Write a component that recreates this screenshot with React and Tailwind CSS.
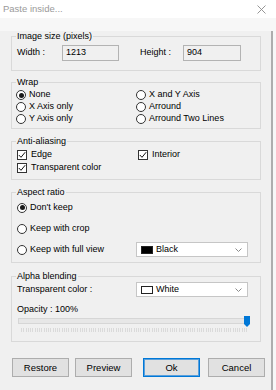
import React from "react";

function Radio({ checked, label }) {
  return (
    <div className="flex h-full items-center gap-[3px]">
      <span className="flex h-[10px] w-[10px] items-center justify-center rounded-full border border-[#333333] bg-white">
        {checked && <span className="h-[5px] w-[5px] rounded-full bg-[#1a1a1a]" />}
      </span>
      <span>{label}</span>
    </div>
  );
}

function Check({ label }) {
  return (
    <div className="flex h-full items-center gap-[4px]">
      <span className="flex h-[10px] w-[10px] items-center justify-center border border-[#333333] bg-white">
        <svg width="8" height="8" viewBox="0 0 8 8">
          <path d="M0.8 4 L3 6.3 L7.2 1.2" fill="none" stroke="#111111" strokeWidth="1" />
        </svg>
      </span>
      <span>{label}</span>
    </div>
  );
}

function Group({ title, className = "", children }) {
  return (
    <fieldset className={`w-[250px] border border-[#d9d9d9] px-[5px] ${className}`}>
      <legend className="-ml-[1px] px-[1px] leading-[10px]">{title}</legend>
      {children}
    </fieldset>
  );
}

function Select({ swatch, label }) {
  return (
    <div className="flex h-[15px] w-[112px] items-center border border-[#c6c6c6] bg-white pl-[4px] pr-[5px]">
      <span className={`h-[8px] w-[12px] border border-[#222222] ${swatch}`} />
      <span className="ml-[3px] flex-1">{label}</span>
      <svg width="7" height="4" viewBox="0 0 7 4">
        <path d="M0.5 0.5 L3.5 3.5 L6.5 0.5" fill="none" stroke="#8a8a8a" strokeWidth="1" />
      </svg>
    </div>
  );
}

function Button({ label, focused, className = "" }) {
  return (
    <button
      className={`h-[19px] w-[57px] border bg-[#e1e1e1] text-[9.5px] leading-none text-black ${
        focused ? "border-[#0078d7] shadow-[inset_0_0_0_1px_#5aa0dc]" : "border-[#adadad]"
      } ${className}`}
    >
      {label}
    </button>
  );
}

export default function App() {
  const ticks = Array.from({ length: 101 });
  return (
    <div className="h-[390px] w-[276px] overflow-hidden bg-[#f7f7f7] font-['Liberation_Sans',Arial,sans-serif] text-[9px] text-black">
      <div className="relative flex h-[18px] items-center bg-white pl-[3px] text-[9.5px] text-[#9a9a9a]">
        <span>Paste inside...</span>
        <svg className="absolute left-[257px] top-[5px]" width="9" height="9" viewBox="0 0 9 9">
          <path d="M0.5 0.5 L8.5 8.5 M8.5 0.5 L0.5 8.5" stroke="#8a8a8a" strokeWidth="0.9" />
        </svg>
      </div>
      <div className="h-[372px] w-[273px] border-r-[2px] border-[#adadad] bg-[#f0f0f0] pl-[11px]">
        <Group title="Image size (pixels)" className="mt-[13px] pb-[9px]">
          <div className="mt-[4px] flex h-[16px] items-center">
            <span className="w-[45px]">Width :</span>
            <span className="flex h-[16px] w-[57px] items-center border border-[#b3b3b3] bg-[#f0f0f0] pl-[3px]">1213</span>
            <span className="ml-[21px] w-[43px]">Height :</span>
            <span className="flex h-[16px] w-[58px] items-center border border-[#b3b3b3] bg-[#f0f0f0] pl-[3px]">904</span>
          </div>
        </Group>

        <Group title="Wrap" className="mt-[6px] pb-[3px]">
          <div className="-ml-[1px] mt-[2px] grid grid-cols-[120px_1fr] auto-rows-[12px]">
            <Radio checked label="None" />
            <Radio label="X and Y Axis" />
            <Radio label="X Axis only" />
            <Radio label="Arround" />
            <Radio label="Y Axis only" />
            <Radio label="Arround Two Lines" />
          </div>
        </Group>

        <Group title="Anti-aliasing" className="mt-[7px] pb-[5px]">
          <div className="mt-[2px] grid grid-cols-[121px_1fr] auto-rows-[13px]">
            <Check label="Edge" />
            <Check label="Interior" />
            <Check label="Transparent color" />
          </div>
        </Group>

        <Group title="Aspect ratio" className="mt-[7px] pb-[2px]">
          <div className="flex flex-col">
            <div className="h-[21px]">
              <Radio checked label="Don't keep" />
            </div>
            <div className="h-[21px]">
              <Radio label="Keep with crop" />
            </div>
            <div className="flex h-[21px] items-center">
              <div className="h-full w-[119px]">
                <Radio label="Keep with full view" />
              </div>
              <Select swatch="bg-black" label="Black" />
            </div>
          </div>
        </Group>

        <Group title="Alpha blending" className="mt-[8px] pb-[9px]">
          <div className="mt-[1px] flex h-[15px] items-center">
            <span className="w-[119px]">Transparent color :</span>
            <Select swatch="bg-white" label="White" />
          </div>
          <div className="mt-[7px] leading-[10px]">Opacity : 100%</div>
          <div className="relative ml-[1px] mt-[4px] h-[6px] w-[232px] border border-[#d6d6d6] bg-[#e7e7e7]">
            <svg className="absolute right-[-1px] top-[-3px]" width="6" height="11" viewBox="0 0 6 11">
              <path d="M0 0 H6 V8 L3 11 L0 8 Z" fill="#0078d7" />
            </svg>
          </div>
          <div className="ml-[4px] mt-[4px] flex h-[4px] w-[226px] justify-between">
            {ticks.map((_, i) => (
              <span key={i} className="h-full w-[1px] bg-[#dadada]" />
            ))}
          </div>
        </Group>

        <div className="mt-[16px] flex">
          <Button label="Restore" className="ml-[1px]" />
          <Button label="Preview" className="ml-[6px] w-[54px]" />
          <Button label="Ok" focused className="ml-[11px] w-[55px]" />
          <Button label="Cancel" className="ml-[8px]" />
        </div>
      </div>
    </div>
  );
}
